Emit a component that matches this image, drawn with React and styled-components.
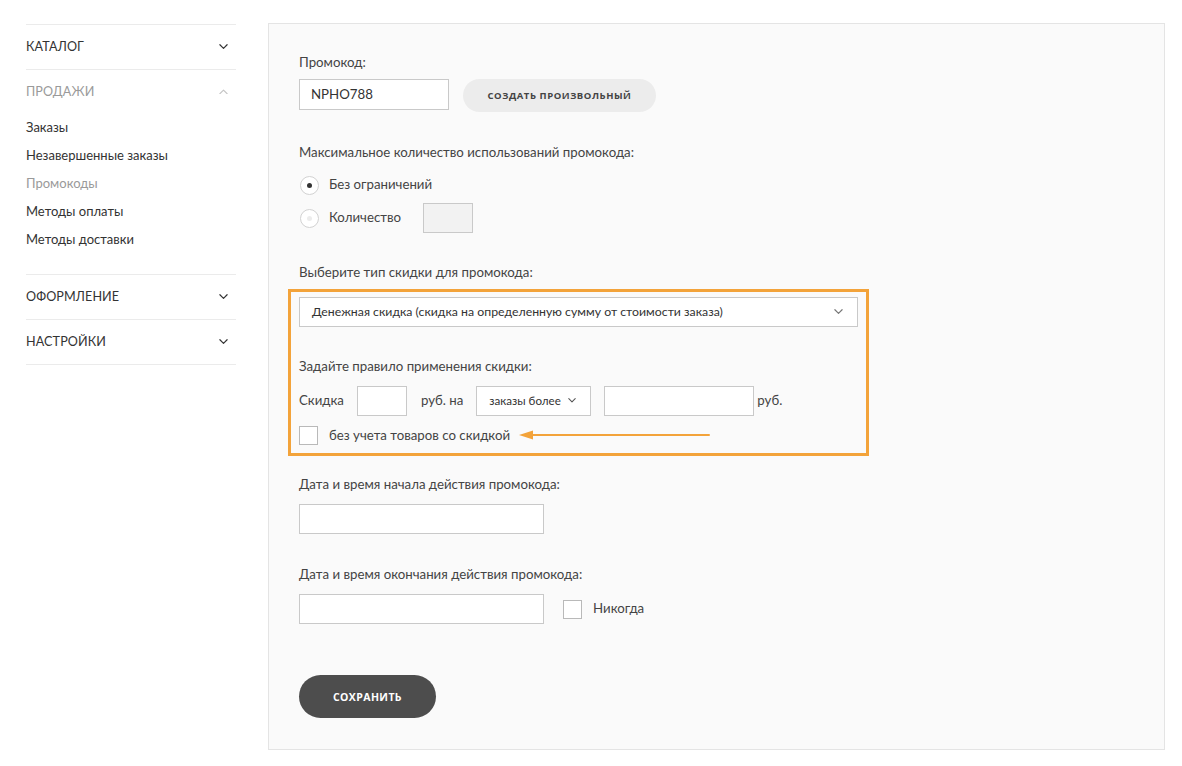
import React from "react";
import styled, { createGlobalStyle } from "styled-components";

const Global = createGlobalStyle`
  html, body { margin: 0; padding: 0; background: #ffffff; }
  body { font-family: Lato, "Open Sans", "Liberation Sans", sans-serif; color: #444; }
  * { box-sizing: border-box; }
`;

const Page = styled.div`
  display: flex;
  align-items: flex-start;
  padding: 23px 0 0 26px;
  width: 1182px;
  height: 766px;
`;

const Sidebar = styled.nav`
  width: 210px;
  margin-top: 1px;
  border-top: 1px solid #ebebeb;
`;

const Section = styled.div`
  border-bottom: 1px solid #ebebeb;
`;

const SectionHead = styled.div`
  height: 44px;
  display: flex;
  align-items: center;
  justify-content: space-between;
  padding: 0 8px 2px 0;
  font-size: 12.6px;
  letter-spacing: 0.1px;
  text-transform: uppercase;
  color: ${(p) => (p.$open ? "#9a9a9a" : "#333")};
  svg { margin-top: 1px; }
`;

const SubList = styled.ul`
  list-style: none;
  margin: -1px 0 0;
  padding: 0 0 21px;
`;

const SubItem = styled.li`
  font-size: 13px;
  line-height: 28px;
  color: ${(p) => (p.$active ? "#9a9a9a" : "#333")};
`;

const Panel = styled.main`
  margin-left: 32px;
  width: 897px;
  height: 727px;
  border: 1px solid #e4e4e4;
  background: #fafafa;
  padding: 28px 30px 0;
`;

const Label = styled.div`
  font-size: 13.25px;
  line-height: 20px;
  color: #444;
  margin-top: ${(p) => p.$mt || 0}px;
`;

const Row = styled.div`
  display: flex;
  align-items: ${(p) => p.$align || "center"};
  margin-top: ${(p) => p.$mt || 0}px;
`;

const TextInput = styled.div`
  width: ${(p) => p.$w}px;
  height: ${(p) => p.$h || 30}px;
  border: 1px solid #c9c9c9;
  background: ${(p) => (p.$disabled ? "#f2f2f2" : "#fff")};
  font-size: 13.25px;
  color: #333;
  display: flex;
  align-items: center;
  padding: 0 0 1px 11px;
  margin-left: ${(p) => p.$ml || 0}px;
  flex-shrink: 0;
`;

const PillButton = styled.button`
  height: ${(p) => (p.$dark ? 43 : 33)}px;
  width: ${(p) => (p.$dark ? 137 : 193)}px;
  border: none;
  border-radius: 22px;
  background: ${(p) => (p.$dark ? "#4d4d4d" : "#ececec")};
  color: ${(p) => (p.$dark ? "#fff" : "#444")};
  font-family: "Open Sans", Lato, sans-serif;
  font-weight: 700;
  font-size: ${(p) => (p.$dark ? 10.5 : 9.5)}px;
  letter-spacing: ${(p) => (p.$dark ? 0.4 : 0.55)}px;
  text-transform: uppercase;
  margin-left: ${(p) => p.$ml || 0}px;
  margin-top: ${(p) => p.$mt || 0}px;
  padding: 0;
  cursor: pointer;
`;

const RadioList = styled.div`
  margin-top: 8px;
  display: flex;
  flex-direction: column;
  gap: 3px;
`;

const RadioRow = styled.label`
  display: flex;
  align-items: center;
  height: 30px;
  font-size: 13.25px;
  color: #444;
`;

const RadioCircle = styled.span`
  width: 19px;
  height: 19px;
  border-radius: 50%;
  border: 1px solid #d2d2d2;
  background: #fff;
  display: flex;
  align-items: center;
  justify-content: center;
  margin-left: 1px;
  margin-right: 10px;
  &::after {
    content: "";
    width: 5px;
    height: 5px;
    border-radius: 50%;
    background: ${(p) => (p.$checked ? "#333" : "#ececec")};
  }
`;

const RadioText = styled.span`
  padding-bottom: 2px;
  width: ${(p) => (p.$w ? p.$w + "px" : "auto")};
`;

const Highlight = styled.div`
  margin: 7px 0 0 -11px;
  width: 581px;
  border: 3px solid #f3a33a;
  padding: 5px 8px 8px;
`;

const Select = styled.div`
  width: ${(p) => p.$w}px;
  height: 30px;
  border: 1px solid #c9c9c9;
  background: #fff;
  display: flex;
  align-items: center;
  justify-content: space-between;
  padding: 0 ${(p) => p.$pr || 12}px 1px ${(p) => p.$pl || 12}px;
  font-size: ${(p) => p.$fs || 13}px;
  color: #333;
  margin-left: ${(p) => p.$ml || 0}px;
  flex-shrink: 0;
`;

const Inline = styled.span`
  font-size: 13.25px;
  color: #444;
  padding-bottom: 2px;
  margin-left: ${(p) => p.$ml || 0}px;
`;

const CheckRow = styled.div`
  position: relative;
  display: flex;
  align-items: center;
  margin-top: ${(p) => p.$mt || 0}px;
  margin-left: ${(p) => p.$ml || 0}px;
`;

const CheckBox = styled.span`
  width: 19px;
  height: 19px;
  border: 1px solid #b9b9b9;
  background: #fff;
  margin-right: ${(p) => p.$gap || 11}px;
  flex-shrink: 0;
`;

const ArrowMark = styled.svg`
  position: absolute;
  left: 220px;
  top: 2px;
`;

const Chevron = ({ up, color = "#333", size = 9 }) => (
  <svg width={size} height={size * 0.6} viewBox="0 0 10 6" fill="none">
    <path
      d={up ? "M1 5.2 L5 1.2 L9 5.2" : "M1 0.8 L5 4.8 L9 0.8"}
      stroke={color}
      strokeWidth="1.3"
      strokeLinecap="round"
      strokeLinejoin="round"
    />
  </svg>
);

export default function App() {
  return (
    <>
      <Global />
      <Page>
        <Sidebar>
          <Section>
            <SectionHead>
              Каталог
              <Chevron />
            </SectionHead>
          </Section>
          <Section>
            <SectionHead $open>
              Продажи
              <Chevron up color="#c4c4c4" />
            </SectionHead>
            <SubList>
              <SubItem>Заказы</SubItem>
              <SubItem>Незавершенные заказы</SubItem>
              <SubItem $active>Промокоды</SubItem>
              <SubItem>Методы оплаты</SubItem>
              <SubItem>Методы доставки</SubItem>
            </SubList>
          </Section>
          <Section>
            <SectionHead>
              Оформление
              <Chevron />
            </SectionHead>
          </Section>
          <Section>
            <SectionHead>
              Настройки
              <Chevron />
            </SectionHead>
          </Section>
        </Sidebar>

        <Panel>
          <Label>Промокод:</Label>
          <Row $mt={7} $align="flex-start">
            <TextInput $w={150} $h={31}>NPHO788</TextInput>
            <PillButton $ml={14}>Создать произвольный</PillButton>
          </Row>

          <Label $mt={30}>Максимальное количество использований промокода:</Label>
          <RadioList>
            <RadioRow>
              <RadioCircle $checked />
              <RadioText>Без ограничений</RadioText>
            </RadioRow>
            <RadioRow>
              <RadioCircle />
              <RadioText $w={94}>Количество</RadioText>
              <TextInput $w={50} $disabled />
            </RadioRow>
          </RadioList>

          <Label $mt={29}>Выберите тип скидки для промокода:</Label>
          <Highlight>
            <Select $w={559} $fs={12.3} $pr={14}>
              Денежная скидка (скидка на определенную сумму от стоимости заказа)
              <Chevron color="#777" />
            </Select>
            <Label $mt={29}>Задайте правило применения скидки:</Label>
            <Row $mt={10}>
              <Inline>Скидка</Inline>
              <TextInput $w={50} $ml={13} />
              <Inline $ml={14}>руб. на</Inline>
              <Select $w={115} $ml={13} $fs={11.6} $pl={12} $pr={14}>
                заказы более
                <Chevron size={8} color="#555" />
              </Select>
              <TextInput $w={150} $ml={13} />
              <Inline $ml={3}>руб.</Inline>
            </Row>
            <CheckRow $mt={10}>
              <CheckBox />
              <Inline>без учета товаров со скидкой</Inline>
              <ArrowMark width="192" height="14" viewBox="0 0 192 14">
                <line x1="10" y1="7" x2="190" y2="7" stroke="#f3a33a" strokeWidth="2" strokeLinecap="round" />
                <polygon points="0,7 14,2.5 14,11.5" fill="#f3a33a" />
              </ArrowMark>
            </CheckRow>
          </Highlight>

          <Label $mt={18}>Дата и время начала действия промокода:</Label>
          <Row $mt={10}>
            <TextInput $w={245} />
          </Row>

          <Label $mt={30}>Дата и время окончания действия промокода:</Label>
          <Row $mt={10}>
            <TextInput $w={245} />
            <CheckRow $ml={19}>
              <CheckBox />
              <Inline>Никогда</Inline>
            </CheckRow>
          </Row>

          <PillButton $dark $mt={51}>Сохранить</PillButton>
        </Panel>
      </Page>
    </>
  );
}
